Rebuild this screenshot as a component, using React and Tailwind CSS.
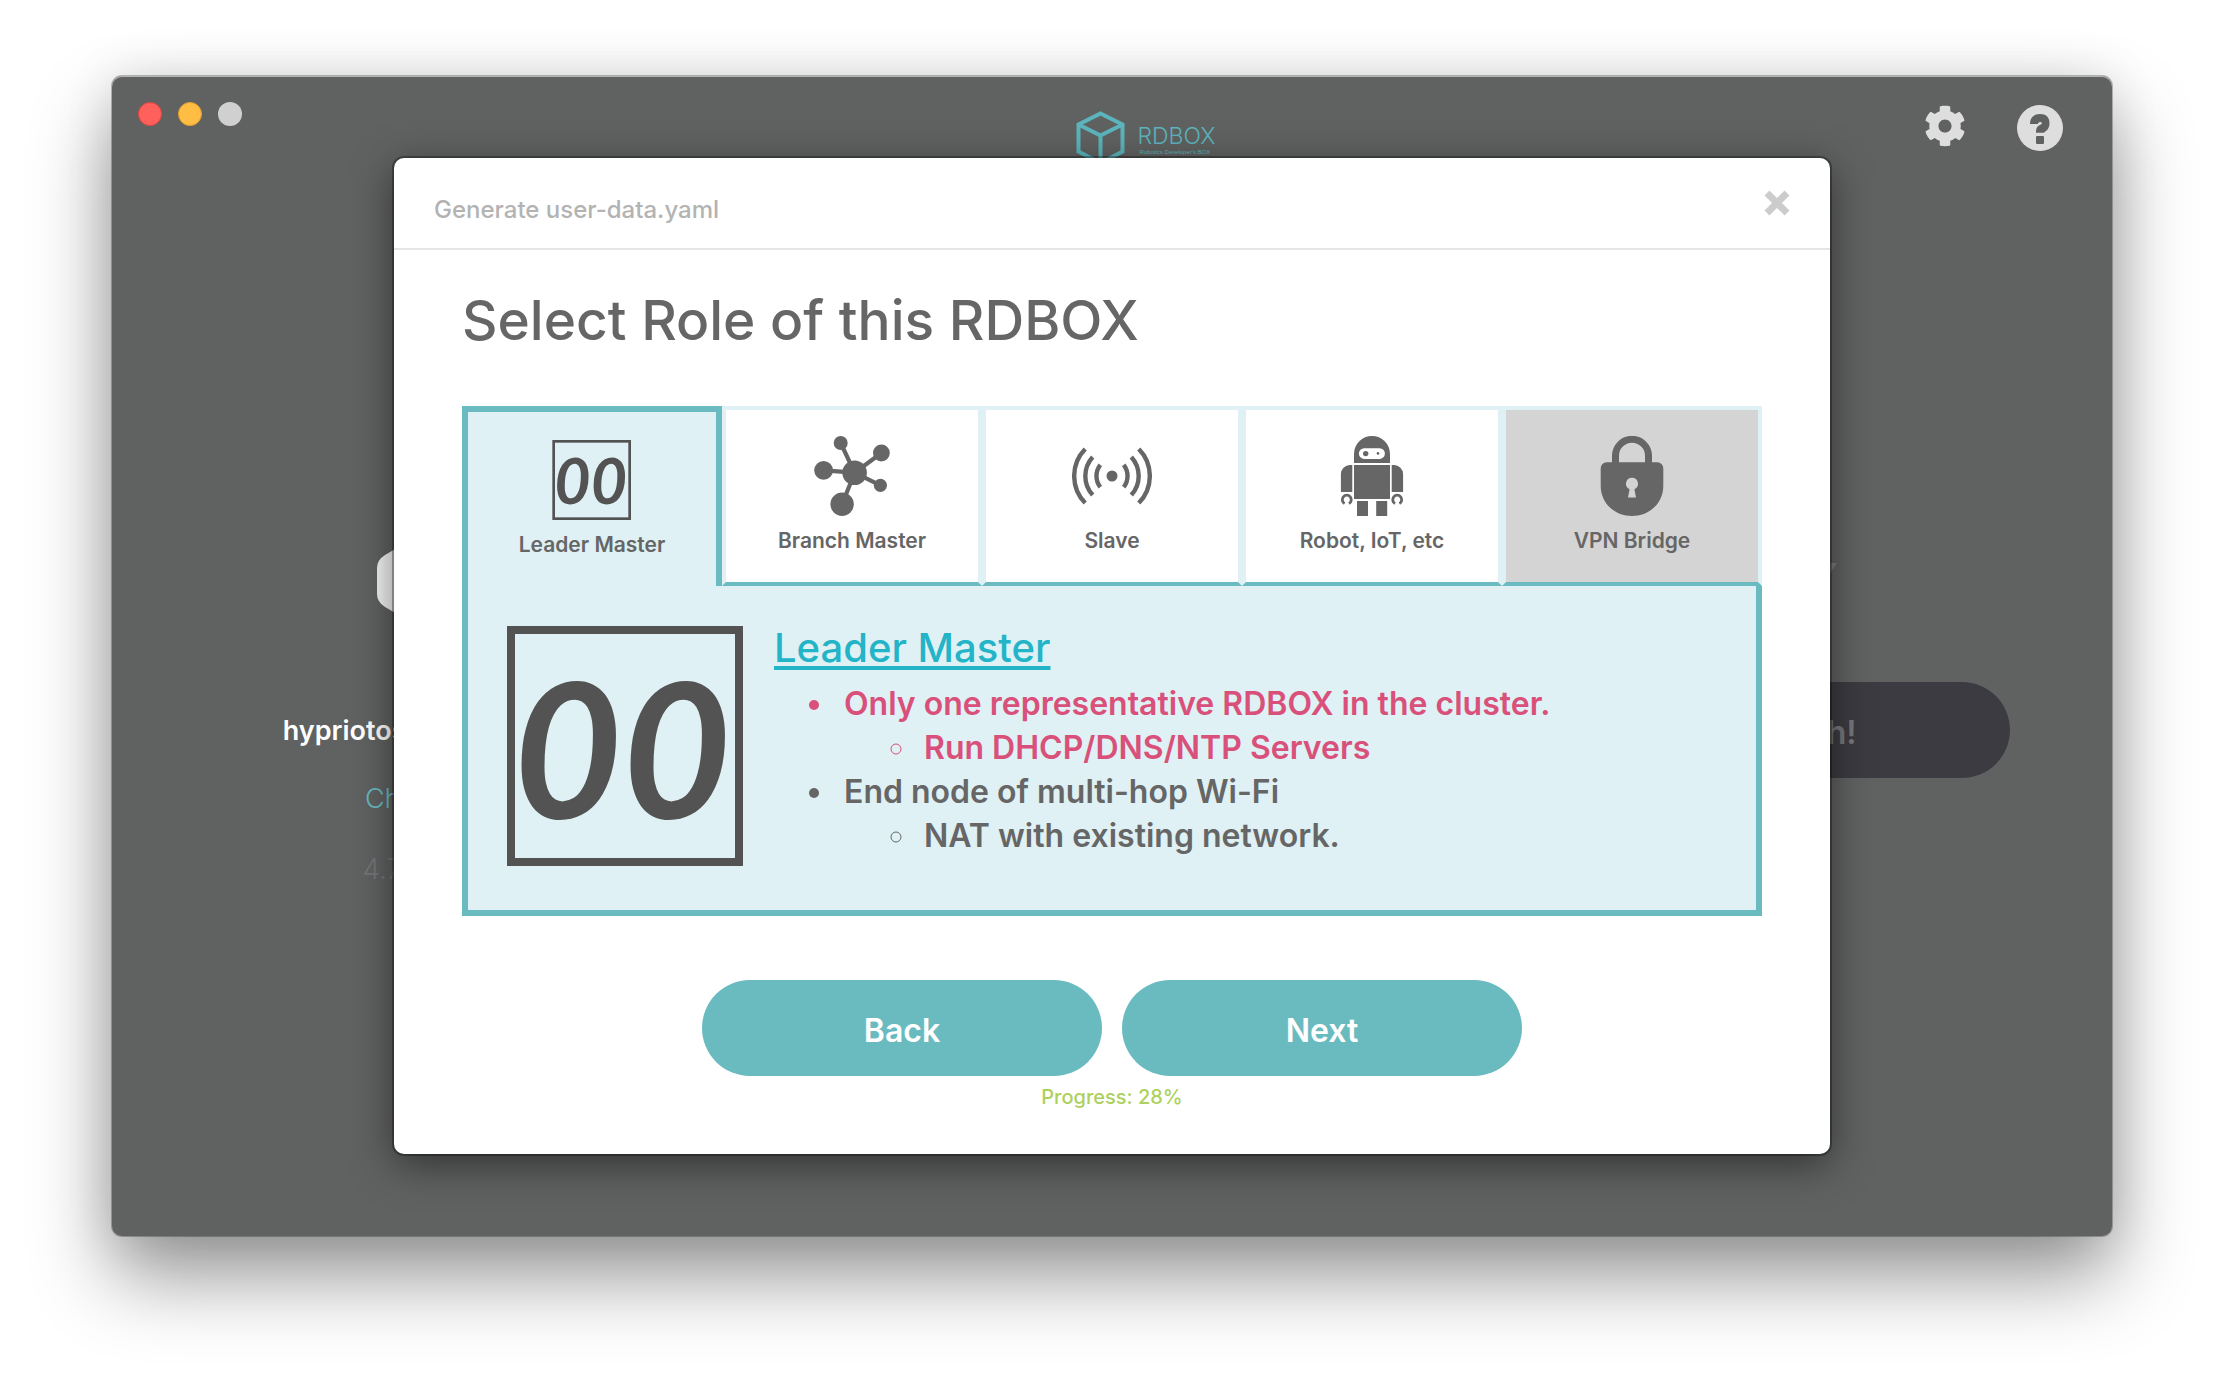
import { useState } from "react";
import { FaCog } from "react-icons/fa";

function ZeroZeroIcon({ className }) {
  return (
    <svg viewBox="0 0 240 240" className={className} overflow="visible" aria-hidden="true">
      <rect x="5" y="4" width="228" height="232" fill="none" stroke="#535353" strokeWidth="8" />
      <text
        x="116"
        y="193"
        textAnchor="middle"
        fill="#535353"
        fontFamily="Lato, sans-serif"
        fontSize="188"
        fontStyle="italic"
        fontWeight="700"
      >
        00
      </text>
    </svg>
  );
}

function NetworkIcon({ className }) {
  return (
    <svg viewBox="0 0 80 80" className={className} fill="currentColor" stroke="currentColor" aria-hidden="true">
      <path
        d="M42.6 36.7 28.7 7M42.6 36.7 69.4 17M42.6 36.7 11.6 34.3M42.6 36.7 68.4 49.3M42.6 36.7 30.1 68.3"
        strokeWidth="4.2"
        fill="none"
      />
      <g stroke="none">
        <circle cx="42.6" cy="36.7" r="12.3" />
        <circle cx="28.7" cy="7" r="7" />
        <circle cx="69.4" cy="17" r="8.4" />
        <circle cx="11.6" cy="34.3" r="9.4" />
        <circle cx="68.4" cy="49.3" r="6.6" />
        <circle cx="30.1" cy="68.3" r="11.7" />
      </g>
    </svg>
  );
}

function SignalIcon({ className }) {
  return (
    <svg viewBox="0 0 80 80" className={className} fill="none" stroke="currentColor" strokeWidth="4.4" aria-hidden="true">
      <circle cx="40" cy="40" r="5.5" fill="currentColor" stroke="none" />
      <path d="M13.2 13A38.6 38.6 0 0 0 13.2 67M20.7 20.9A28.4 28.4 0 0 0 20.7 59.1M28.3 28.9A18 18 0 0 0 28.3 51.1" />
      <path d="M66.8 13A38.6 38.6 0 0 1 66.8 67M59.3 20.9A28.4 28.4 0 0 1 59.3 59.1M51.7 28.9A18 18 0 0 1 51.7 51.1" />
    </svg>
  );
}

function RobotIcon({ className }) {
  return (
    <svg viewBox="0 0 80 80" className={className} fill="currentColor" aria-hidden="true">
      <path
        fillRule="evenodd"
        d="M22 27V18a18 18 0 0 1 36 0v9zM32.2 12.3a5.3 5.3 0 0 0 0 10.6h15.4a5.3 5.3 0 0 0 0-10.6z"
      />
      <circle cx="33.7" cy="17.6" r="2.7" />
      <circle cx="46" cy="17.4" r="1.3" />
      <rect x="22" y="29" width="36" height="34" />
      <path d="M20.3 29v27H8.9V38a9 9 0 0 1 9-9zM59.7 29v27h11.4V38a9 9 0 0 0-9-9z" />
      <path
        d="M12.6 67.6a4.5 4.5 0 1 1 4.4 0M63 67.6a4.5 4.5 0 1 1 4.4 0"
        fill="none"
        stroke="currentColor"
        strokeWidth="2.8"
      />
      <rect x="25" y="65" width="11" height="15" />
      <rect x="44.2" y="65" width="11" height="15" />
    </svg>
  );
}

function LockIcon({ className }) {
  return (
    <svg viewBox="0 0 80 80" className={className} fill="currentColor" aria-hidden="true">
      <path d="M23.5 28V19.8a16.5 16.5 0 0 1 33 0V28" fill="none" stroke="currentColor" strokeWidth="7" />
      <path
        fillRule="evenodd"
        d="M14.7 26.2h50.6a6 6 0 0 1 6 6V50C71.3 67 57.5 80 40 80S8.7 67 8.7 50V32.2a6 6 0 0 1 6-6zM40 41.7a6 6 0 0 0-2.4 11.5L36 61.4h8l-1.6-8.2A6 6 0 0 0 40 41.7z"
      />
    </svg>
  );
}

function QuestionIcon({ className }) {
  return (
    <svg viewBox="0 0 46 46" className={className} aria-hidden="true">
      <circle cx="23" cy="23" r="23" fill="#dedede" />
      <path
        d="M13 19C13 12.5 17 9 23 9s9.5 3.4 9.5 8.8c0 4-1 6.2-3.5 8.2-1.2 1-1.6 1.2-2 1.7h-8c0-4.5.9-6 3.5-7.5 1.6-.9 2.3-1.3 2.3-2 0-.8-.6-1.2-1.6-1.2-1.3 0-2 .7-2.4 2z"
        fill="#606261"
      />
      <rect x="19" y="31" width="8" height="8" rx="1" fill="#606261" />
    </svg>
  );
}

const roles = [
  { id: "leader", label: "Leader Master", Icon: ZeroZeroIcon },
  { id: "branch", label: "Branch Master", Icon: NetworkIcon },
  { id: "slave", label: "Slave", Icon: SignalIcon },
  { id: "robot", label: "Robot, IoT, etc", Icon: RobotIcon },
  { id: "vpn", label: "VPN Bridge", Icon: LockIcon, disabled: true },
];

function RoleTab({ role, selected, onSelect }) {
  const state = selected
    ? "border-x-6 border-t-6 border-[#69bbc0] bg-[#dff1f4] pt-7"
    : role.disabled
      ? "border-4 border-[#dff1f4] border-b-[#69bbc0] bg-[#d4d4d4] pt-[26px]"
      : "border-4 border-[#dff1f4] border-b-[#69bbc0] bg-white pt-[26px]";
  return (
    <button
      type="button"
      role="tab"
      aria-selected={selected}
      disabled={role.disabled}
      onClick={() => onSelect(role.id)}
      className={`flex h-[180px] flex-col items-center gap-[10px] ${state}`}
    >
      <role.Icon className="size-20" />
      <span className="text-[21px] leading-[30px] font-semibold">{role.label}</span>
    </button>
  );
}

function Backdrop() {
  return (
    <div className="col-start-1 row-start-1 flex flex-col">
      <header className="grid grid-cols-3 px-[26px]">
        <div className="flex gap-4 pt-[26px]">
          <span className="size-6 rounded-full border border-[#e2463f] bg-[#ff605c]" />
          <span className="size-6 rounded-full border border-[#e0a030] bg-[#ffbd44]" />
          <span className="size-6 rounded-full bg-[#d0d0d0]" />
        </div>
        <div className="flex justify-center gap-3 pt-[34px] pl-[68px] text-[#5cb5bd]">
          <svg viewBox="0 0 49 56" className="h-14 w-[49px]" fill="none" stroke="currentColor" strokeWidth="4" aria-hidden="true">
            <path d="M24.5 3.5 46.5 14.5V41.5L24.5 53 2.5 41.5V14.5zM2.5 14.5 24.5 25.5 46.5 14.5M24.5 25.5V53" />
          </svg>
          <div className="flex flex-col pt-[14px]">
            <span className="text-[23px] leading-6 font-light">RDBOX</span>
            <span className="pl-[2px] font-['Liberation_Sans',sans-serif] text-[6px] leading-2">Robotics Developer's BOX</span>
          </div>
        </div>
        <div className="flex justify-end gap-[51px] pt-[29px] pr-[23px] text-[#dedede]">
          <button type="button" aria-label="Settings" className="size-[42px]">
            <FaCog className="size-[42px]" />
          </button>
          <button type="button" aria-label="Help" className="size-[46px]">
            <QuestionIcon className="size-[46px]" />
          </button>
        </div>
      </header>
      <div className="flex justify-between px-[102px] pt-[373px]">
        <section className="flex w-[400px] flex-col items-center">
          <svg viewBox="0 0 74 84" className="h-[84px] w-[74px]" aria-hidden="true">
            <path
              d="M31 2.5Q37 -1 43 2.5L66 16Q74 21 74 29V55Q74 63 66 68L43 81.5Q37 85 31 81.5L8 68Q0 63 0 55V29Q0 21 8 16z"
              fill="#f5f5f5"
            />
          </svg>
          <p className="mt-[88px] text-[27px] leading-10 font-semibold text-white">hypriotos-rpi64.img</p>
          <a href="#change" className="mt-7 text-[27px] leading-10 font-light text-[#69bbc0]">
            Change
          </a>
          <p className="mt-[30px] text-[28px] leading-10 font-light text-[#75757b]">4.73 GB</p>
        </section>
        <section className="flex w-[400px] flex-col items-center">
          <svg viewBox="0 0 54 84" className="h-[84px] w-[54px]" fill="#7b7d7c" aria-hidden="true">
            <path d="M18 0H44L34 24H54L14 84 24 42H2z" />
          </svg>
          <button
            type="button"
            disabled
            className="mt-[59px] h-24 w-full rounded-full bg-[#3c3b41] pt-[6px] text-[32px] font-semibold text-[#76777b]"
          >
            Flash!
          </button>
        </section>
      </div>
    </div>
  );
}

export default function App() {
  const [selected, setSelected] = useState("leader");
  return (
    <div className="min-h-screen bg-white px-28 pt-[76px] pb-[148px] font-['Inter',sans-serif] text-[#666666]">
      <main className="grid grid-cols-1 rounded-[10px] bg-[#606261] shadow-[0_0_0_1px_rgba(0,0,0,0.25),inset_0_1px_0_#b4b6b5,0_40px_80px_rgba(0,0,0,0.42),0_0_50px_rgba(0,0,0,0.1)]">
        <Backdrop />
        <div
          role="dialog"
          aria-labelledby="dialog-title"
          className="z-10 col-start-1 row-start-1 mx-[282px] my-[82px] flex flex-col rounded-[10px] bg-white shadow-[0_0_0_2px_rgba(0,0,0,0.3),0_10px_40px_rgba(0,0,0,0.5)]"
        >
          <header className="flex h-[92px] items-center justify-between border-b-2 border-[#e5e5e5] px-10">
            <h1 id="dialog-title" className="pt-[14px] text-2xl font-medium text-[#b3b3b3]">
              Generate user-data.yaml
            </h1>
            <button type="button" aria-label="Close" className="text-[#cccccc]">
              <svg viewBox="0 0 26 26" className="size-[26px]" fill="none" stroke="currentColor" strokeWidth="7" aria-hidden="true">
                <path d="M3 3 23 23M23 3 3 23" />
              </svg>
            </button>
          </header>
          <div className="flex flex-col px-[68px] pt-[38px] pb-[43px]">
            <h2 className="text-[55px] leading-[64px] font-medium">Select Role of this RDBOX</h2>
            <div role="tablist" className="mt-[54px] grid grid-cols-5">
              {roles.map((role) => (
                <RoleTab key={role.id} role={role} selected={role.id === selected} onSelect={setSelected} />
              ))}
            </div>
            <div
              role="tabpanel"
              className="flex items-start gap-7 border-x-6 border-b-6 border-[#69bbc0] bg-[#dff1f4] px-[38px] pt-10 pb-11"
            >
              <ZeroZeroIcon className="size-60 shrink-0" />
              <div>
                <a
                  href="#leader"
                  className="text-[40px] leading-[44px] font-medium text-[#23b4c8] underline decoration-4 underline-offset-4"
                >
                  Leader Master
                </a>
                <ul className="mt-3 list-disc pl-[62px] text-[32px] leading-[44px] font-semibold">
                  <li className="pl-2 text-[#d9507a]">
                    Only one representative RDBOX in the cluster.
                    <ul className="list-[circle] pl-[74px]">
                      <li className="pl-[6px]">Run DHCP/DNS/NTP Servers</li>
                    </ul>
                  </li>
                  <li className="pl-2">
                    End node of multi-hop Wi-Fi
                    <ul className="list-[circle] pl-[74px]">
                      <li className="pl-[6px]">NAT with existing network.</li>
                    </ul>
                  </li>
                </ul>
              </div>
            </div>
            <div className="mt-16 flex justify-center gap-5">
              <button type="button" className="h-24 w-[400px] rounded-full bg-[#69bbc0] pt-[6px] text-[32px] font-semibold text-white">
                Back
              </button>
              <button type="button" className="h-24 w-[400px] rounded-full bg-[#69bbc0] pt-[6px] text-[32px] font-semibold text-white">
                Next
              </button>
            </div>
            <p className="mt-[7px] text-center text-xl leading-7 font-medium text-[#add15c]">Progress: 28%</p>
          </div>
        </div>
      </main>
    </div>
  );
}
